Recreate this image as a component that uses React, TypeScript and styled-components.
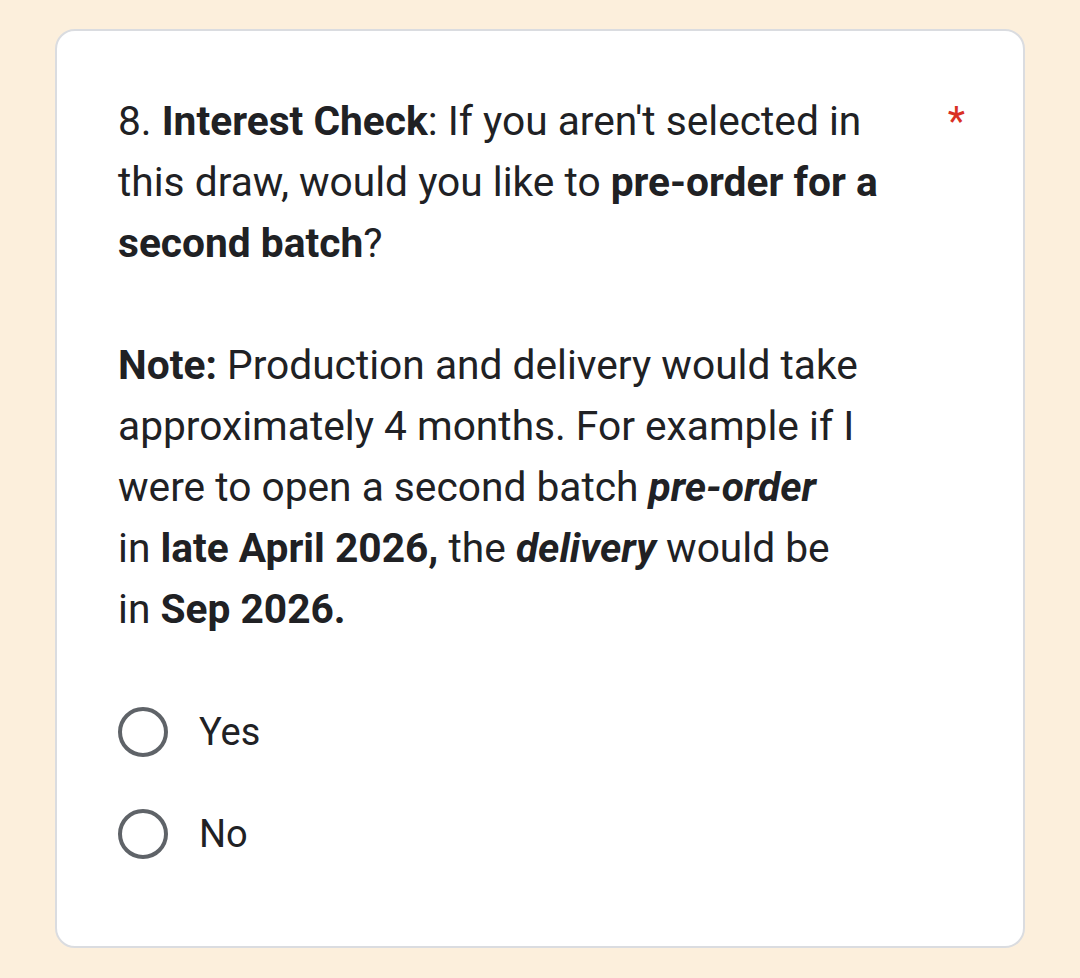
import React from "react";
import styled, { createGlobalStyle } from "styled-components";

const GlobalStyle = createGlobalStyle`
  html, body {
    margin: 0;
    padding: 0;
    background: #fcefdc;
  }
  body {
    font-family: Roboto, "Noto Sans", Arial, sans-serif;
    color: #202124;
  }
`;

const Page = styled.div`
  width: 1080px;
  height: 978px;
  box-sizing: border-box;
  padding: 29px 55px 0 55px;
  background: #fcefdc;
`;

const Card = styled.div`
  box-sizing: border-box;
  width: 970px;
  height: 919px;
  background: #ffffff;
  border: 2px solid #dadce0;
  border-radius: 20px;
  padding: 60px 40px 0 61px;
`;

const QuestionRow = styled.div`
  display: flex;
  align-items: flex-start;
  justify-content: space-between;
`;

const QuestionText = styled.div`
  width: 800px;
  font-size: 40.7px;
  line-height: 61px;
  color: #202124;
  white-space: nowrap;
`;

const Required = styled.span`
  color: #d93025;
  font-size: 40px;
  line-height: 61px;
  margin-right: 18px;
`;

const Blank = styled.div`
  height: 61px;
`;

const Options = styled.div`
  display: flex;
  flex-direction: column;
  gap: 30px;
  margin-top: 56px;
`;

const Option = styled.label`
  display: flex;
  align-items: center;
  gap: 31px;
  height: 72px;
  font-size: 38px;
  color: #202124;
`;

const Circle = styled.span`
  box-sizing: border-box;
  width: 50px;
  height: 50px;
  border-radius: 50%;
  border: 4.5px solid #5f6368;
  flex-shrink: 0;
`;

const App: React.FC = () => {
  return (
    <>
      <GlobalStyle />
      <Page>
        <Card>
          <QuestionRow>
            <QuestionText>
              8. <b>Interest Check</b>: If you aren't selected in
              <br />
              this draw, would you like to <b>pre-order for a</b>
              <br />
              <b>second batch</b>?
              <Blank />
              <b>Note:</b> Production and delivery would take
              <br />
              approximately 4 months. For example if I
              <br />
              were to open a second batch <b><i>pre-order</i></b>
              <br />
              in <b>late April 2026,</b> the <b><i>delivery</i></b> would be
              <br />
              in <b>Sep 2026.</b>
            </QuestionText>
            <Required>*</Required>
          </QuestionRow>
          <Options>
            <Option>
              <Circle />
              Yes
            </Option>
            <Option>
              <Circle />
              No
            </Option>
          </Options>
        </Card>
      </Page>
    </>
  );
};

export default App;
